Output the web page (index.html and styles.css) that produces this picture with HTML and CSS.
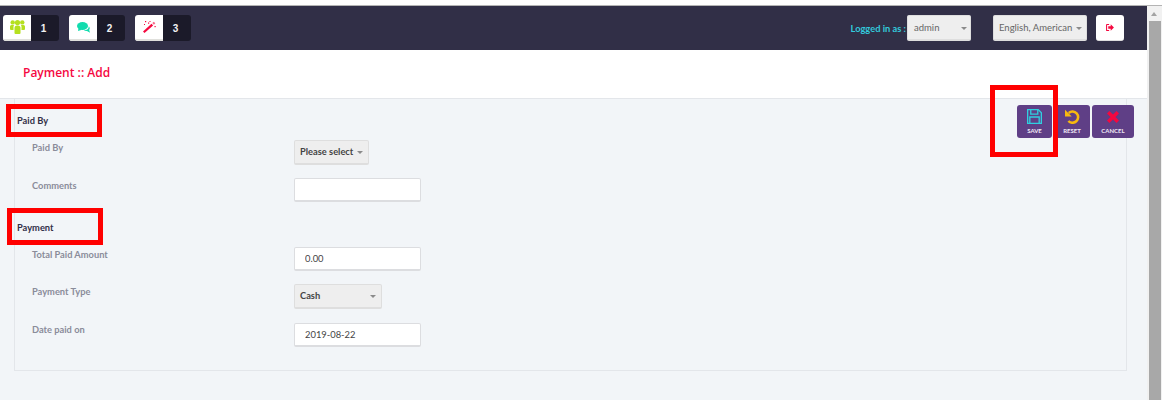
FILE: index.html
```html
<!DOCTYPE html>
<html lang="en">

<head>
    <meta charset="UTF-8" />
    <title>Payment :: Add</title>
    <link rel="stylesheet" href="styles.css">
</head>

<body>

    <div class="page">
        <div class="main">
            <!-- top bar -->
            <header class="topbar">
                <div class="shortcuts">
                    <a class="shortcut">
                        <span class="shortcut-icon">
                            <svg width="15" height="14" viewBox="0 0 15 14" fill="#b5e01f">
                                <circle cx="2.700" cy="2.400" r="2.200" />
                                <circle cx="12.300" cy="2.400" r="2.200" />
                                <circle cx="7.500" cy="2.600" r="2.600" />
                                <path d="M0 9V6.500Q0 5 1.500 5H4L3.500 6.500V10H1Q0 10 0 9z" />
                                <path d="M15 9V6.500Q15 5 13.500 5H11L11.500 6.500V10H14Q15 10 15 9z" />
                                <path d="M4.500 13V8q0-2.500 2.500-2.500h1q2.500 0 2.500 2.500v5q0 1-1 1h-4q-1 0-1-1z" />
                            </svg>
                        </span>
                        <span class="shortcut-num">1</span>
                    </a>
                    <a class="shortcut">
                        <span class="shortcut-icon">
                            <svg width="13" height="11" viewBox="0 0 13 11" fill="#11dcae">
                                <ellipse cx="5.500" cy="4" rx="5.500" ry="4" />
                                <path d="M1.500 6l-.5 3 4-1.200z" />
                                <path d="M11.800 4.200q1.700 1.800.4 3.800l.8 2.800-3-1.800q-2 .3-3.200-.7 5-.3 5-4.100z" />
                            </svg>
                        </span>
                        <span class="shortcut-num">2</span>
                    </a>
                    <a class="shortcut">
                        <span class="shortcut-icon">
                            <svg width="13" height="12" viewBox="0 0 13 12" fill="#f5083f">
                                <path d="M0 10.500L8.500 2.800l1.600 1.700L1.500 12z" />
                                <path d="M9.300 2l1.500-1.300 1.500 1.600L10.900 3.700z" fill="#f76a8a" />
                                <rect x="2" y="0" width="1.200" height="1.200" />
                                <rect x="5" y="1.500" width="1.200" height="1.200" />
                                <rect x="6.500" y="0" width="1" height="1" />
                                <rect x="1" y="3" width="1" height="1" />
                                <rect x="11.500" y="5" width="1.200" height="1.200" />
                            </svg>
                        </span>
                        <span class="shortcut-num">3</span>
                    </a>
                </div>
                <div class="topbar-right">
                    <span class="logged-label">Logged in as :</span>
                    <div class="select user-select">
                        <span>admin</span><i class="caret"></i>
                    </div>
                    <div class="select lang-select">
                        <span>English, American</span><i class="caret"></i>
                    </div>
                    <a class="logout">
                        <svg width="8" height="7" viewBox="0 0 9 8" fill="#f5083f">
                            <path d="M0 1Q0 0 1 0h2.500v1.200H1.200v5.600h2.300V8H1Q0 8 0 7z" />
                            <path d="M2.500 2.700h2.800V.3L9 4 5.300 7.700V5.300H2.500z" />
                        </svg>
                    </a>
                </div>
            </header>

            <div class="page-title">
                <h1>Payment :: Add</h1>
            </div>

            <div class="content">
                <form class="panel">
                    <div class="actions">
                        <a class="action action-save">
                            <svg width="15" height="15" viewBox="0 0 16 16" fill="none" stroke="#2fd0e0" stroke-width="1.400">
                                <path d="M.7 .7H12l3.300 3.300v11.300H.7z" />
                                <path d="M4 .7v4.800h7.500V.7" />
                                <path d="M3 15.300V8.500h10v6.800" />
                            </svg>
                            <span>SAVE</span>
                        </a>
                        <a class="action action-reset">
                            <svg width="15" height="15" viewBox="0 0 16 16">
                                <path d="M4 4.200A6 6 0 1 1 3.600 12.800" fill="none" stroke="#f7b90f" stroke-width="2.700" />
                                <path d="M0 .8V8h7.200z" fill="#f7b90f" />
                            </svg>
                            <span>RESET</span>
                        </a>
                        <a class="action action-cancel">
                            <svg width="12" height="12" viewBox="0 0 12 12" fill="none" stroke="#f5083f" stroke-width="3.400">
                                <path d="M1.200 1.200l9.600 9.600M10.800 1.200l-9.600 9.600" />
                            </svg>
                            <span>CANCEL</span>
                        </a>
                    </div>

                    <h2 class="section-title">Paid By</h2>
                    <div class="row">
                        <label>Paid By</label>
                        <div class="select form-select paid-select">
                            <span>Please select</span><i class="caret"></i>
                        </div>
                    </div>
                    <div class="row">
                        <label>Comments</label>
                        <input class="text-input" type="text" />
                    </div>

                    <h2 class="section-title section-payment">Payment</h2>
                    <div class="row">
                        <label>Total Paid Amount</label>
                        <input class="text-input" type="text" value="0.00" />
                    </div>
                    <div class="row row-type">
                        <label>Payment Type</label>
                        <div class="select form-select type-select">
                            <span>Cash</span><i class="caret"></i>
                        </div>
                    </div>
                    <div class="row row-date">
                        <label>Date paid on</label>
                        <input class="text-input" type="text" value="2019-08-22" />
                    </div>
                </form>
            </div>
        </div>

        <!-- scrollbar -->
        <div class="scrollbar">
            <i class="scroll-up"></i>
            <div class="scroll-thumb"></div>
        </div>
    </div>

    <!-- red annotation boxes drawn on the screenshot -->
    <div class="mark mark-paid"></div>
    <div class="mark mark-payment"></div>
    <div class="mark mark-save"></div>

</body>

</html>
```

FILE: styles.css
```css
* {
    box-sizing: border-box;
}

html,
body {
    margin: 0;
    height: 400px;
    overflow: hidden;
}

body {
    background: #fff;
    font-family: Lato, sans-serif;
    font-size: 10px;
    position: relative;
}

.page {
    display: flex;
    height: 400px;
    padding-top: 5px;
}

.main {
    width: 1147px;
    border-top: 1px solid #b4b4b4;
    display: flex;
    flex-direction: column;
}

/* top bar */
.topbar {
    height: 44px;
    background: #312f47;
    display: flex;
    align-items: center;
    justify-content: space-between;
    padding: 0 23px 0 3px;
}

.shortcuts {
    display: flex;
    gap: 10px;
}

.shortcut {
    display: flex;
    width: 56px;
    height: 26px;
    border-radius: 3px;
    overflow: hidden;
}

.shortcut-icon {
    width: 28px;
    background: #fff;
    border-bottom: 2px solid #e0e0dc;
    display: flex;
    align-items: center;
    justify-content: center;
}

.shortcut-num {
    width: 28px;
    padding-right: 3px;
    background: #1b1a29;
    color: #f2f2f2;
    font-family: "Liberation Sans", sans-serif;
    font-size: 10px;
    font-weight: bold;
    display: flex;
    align-items: center;
    justify-content: center;
}

.topbar-right {
    display: flex;
    align-items: center;
}

.logged-label {
    color: #33c9dc;
    font-size: 9.300px;
    font-weight: bold;
    margin-right: 1px;
    white-space: nowrap;
}

.select {
    display: flex;
    align-items: center;
    justify-content: space-between;
    background: #eeeeee;
    border: 1px solid #dedede;
    border-bottom-width: 2px;
    border-radius: 2px;
    color: #555;
    white-space: nowrap;
}

.user-select {
    width: 64px;
    height: 26px;
    padding: 0 2px 0 6px;
    font-size: 9.500px;
    color: #666;
}

.lang-select {
    width: 94px;
    height: 26px;
    margin-left: 22px;
    padding: 0 3px 0 5px;
    font-size: 9.500px;
    color: #666;
}

.caret {
    width: 0;
    height: 0;
    border-left: 3px solid transparent;
    border-right: 3px solid transparent;
    border-top: 3px solid #8a8a8a;
    margin: 2px 1px 0 0;
}

.logout {
    width: 28px;
    height: 26px;
    margin-left: 9px;
    background: #fff;
    border-bottom: 1px solid #ddd;
    border-radius: 3px;
    display: flex;
    align-items: center;
    justify-content: center;
}

/* title */
.page-title {
    height: 48px;
    background: #fff;
    padding: 0 23px;
    display: flex;
    align-items: center;
}

.page-title h1 {
    margin: 0 0 4px;
    color: #f5083f;
    font-family: "Open Sans", sans-serif;
    font-size: 12px;
    font-weight: 600;
}

.content {
    flex: 1;
    background: #f2f5f8;
    border-top: 1px solid #e3e6ea;
}

.panel {
    margin-left: 14px;
    width: 1113px;
    height: 272px;
    border: 1px solid #e3e6ea;
    border-top: 0;
    padding: 16px 0 0 17px;
}

.actions {
    float: right;
    margin: -10px -8px 0 0;
    display: flex;
    gap: 2px;
}

.action {
    height: 33px;
    background: #5f3f86;
    border-radius: 3px;
    color: #efe9f5;
    font-size: 6px;
    font-weight: bold;
    display: flex;
    flex-direction: column;
    align-items: center;
    padding-top: 4px;
}

.action span {
    margin-top: 3px;
    line-height: 8px;
}

.action-save {
    width: 35px;
}

.action-reset {
    width: 36px;
}

.action-cancel {
    width: 42px;
}

.action-cancel svg {
    margin: 2px 0 1px;
}

.section-title {
    margin: 0 0 13px -15px;
    color: #312f47;
    font-size: 9.300px;
    font-weight: bold;
    line-height: 12px;
}

.section-payment {
    margin-top: 20px;
}

.row {
    display: flex;
    align-items: flex-start;
    margin-bottom: 13px;
}

.row-type {
    margin-bottom: 14px;
}

.row label {
    width: 262px;
    padding-top: 2px;
    color: #8a8c9a;
    font-size: 9.300px;
    font-weight: bold;
    line-height: 12px;
}

.row-date label {
    padding-top: 1px;
}

.form-select {
    height: 25px;
    padding: 0 4px 2px 5px;
    color: #444;
    font-size: 9.300px;
    font-weight: bold;
}

.paid-select {
    width: 75px;
}

.type-select {
    width: 88px;
}

.text-input {
    width: 127px;
    height: 24px;
    background: #fff;
    border: 1px solid #dcdde0;
    border-bottom-width: 2px;
    border-radius: 2px;
    padding: 0 9px 0 10px;
    color: #444;
    font-family: Lato, sans-serif;
    font-size: 9.400px;
    outline: none;
}

/* scrollbar */
.scrollbar {
    width: 15px;
    background: #f1f1f1;
    border-top: 1px solid #b4b4b4;
    position: relative;
    padding: 15px 1px 0 2px;
}

.scroll-up {
    position: absolute;
    top: 6px;
    left: 4px;
    width: 0;
    height: 0;
    border-left: 3px solid transparent;
    border-right: 3px solid transparent;
    border-bottom: 4px solid #a3a3a3;
}

.scroll-thumb {
    height: 100%;
    background: #a8a8a8;
}

/* annotations */
.mark {
    position: absolute;
    border: 5px solid #ff0000;
}

.mark-paid {
    left: 6px;
    top: 104px;
    width: 96px;
    height: 33px;
}

.mark-payment {
    left: 7px;
    top: 208px;
    width: 96px;
    height: 37px;
}

.mark-save {
    left: 990px;
    top: 85px;
    width: 68px;
    height: 72px;
}
```
